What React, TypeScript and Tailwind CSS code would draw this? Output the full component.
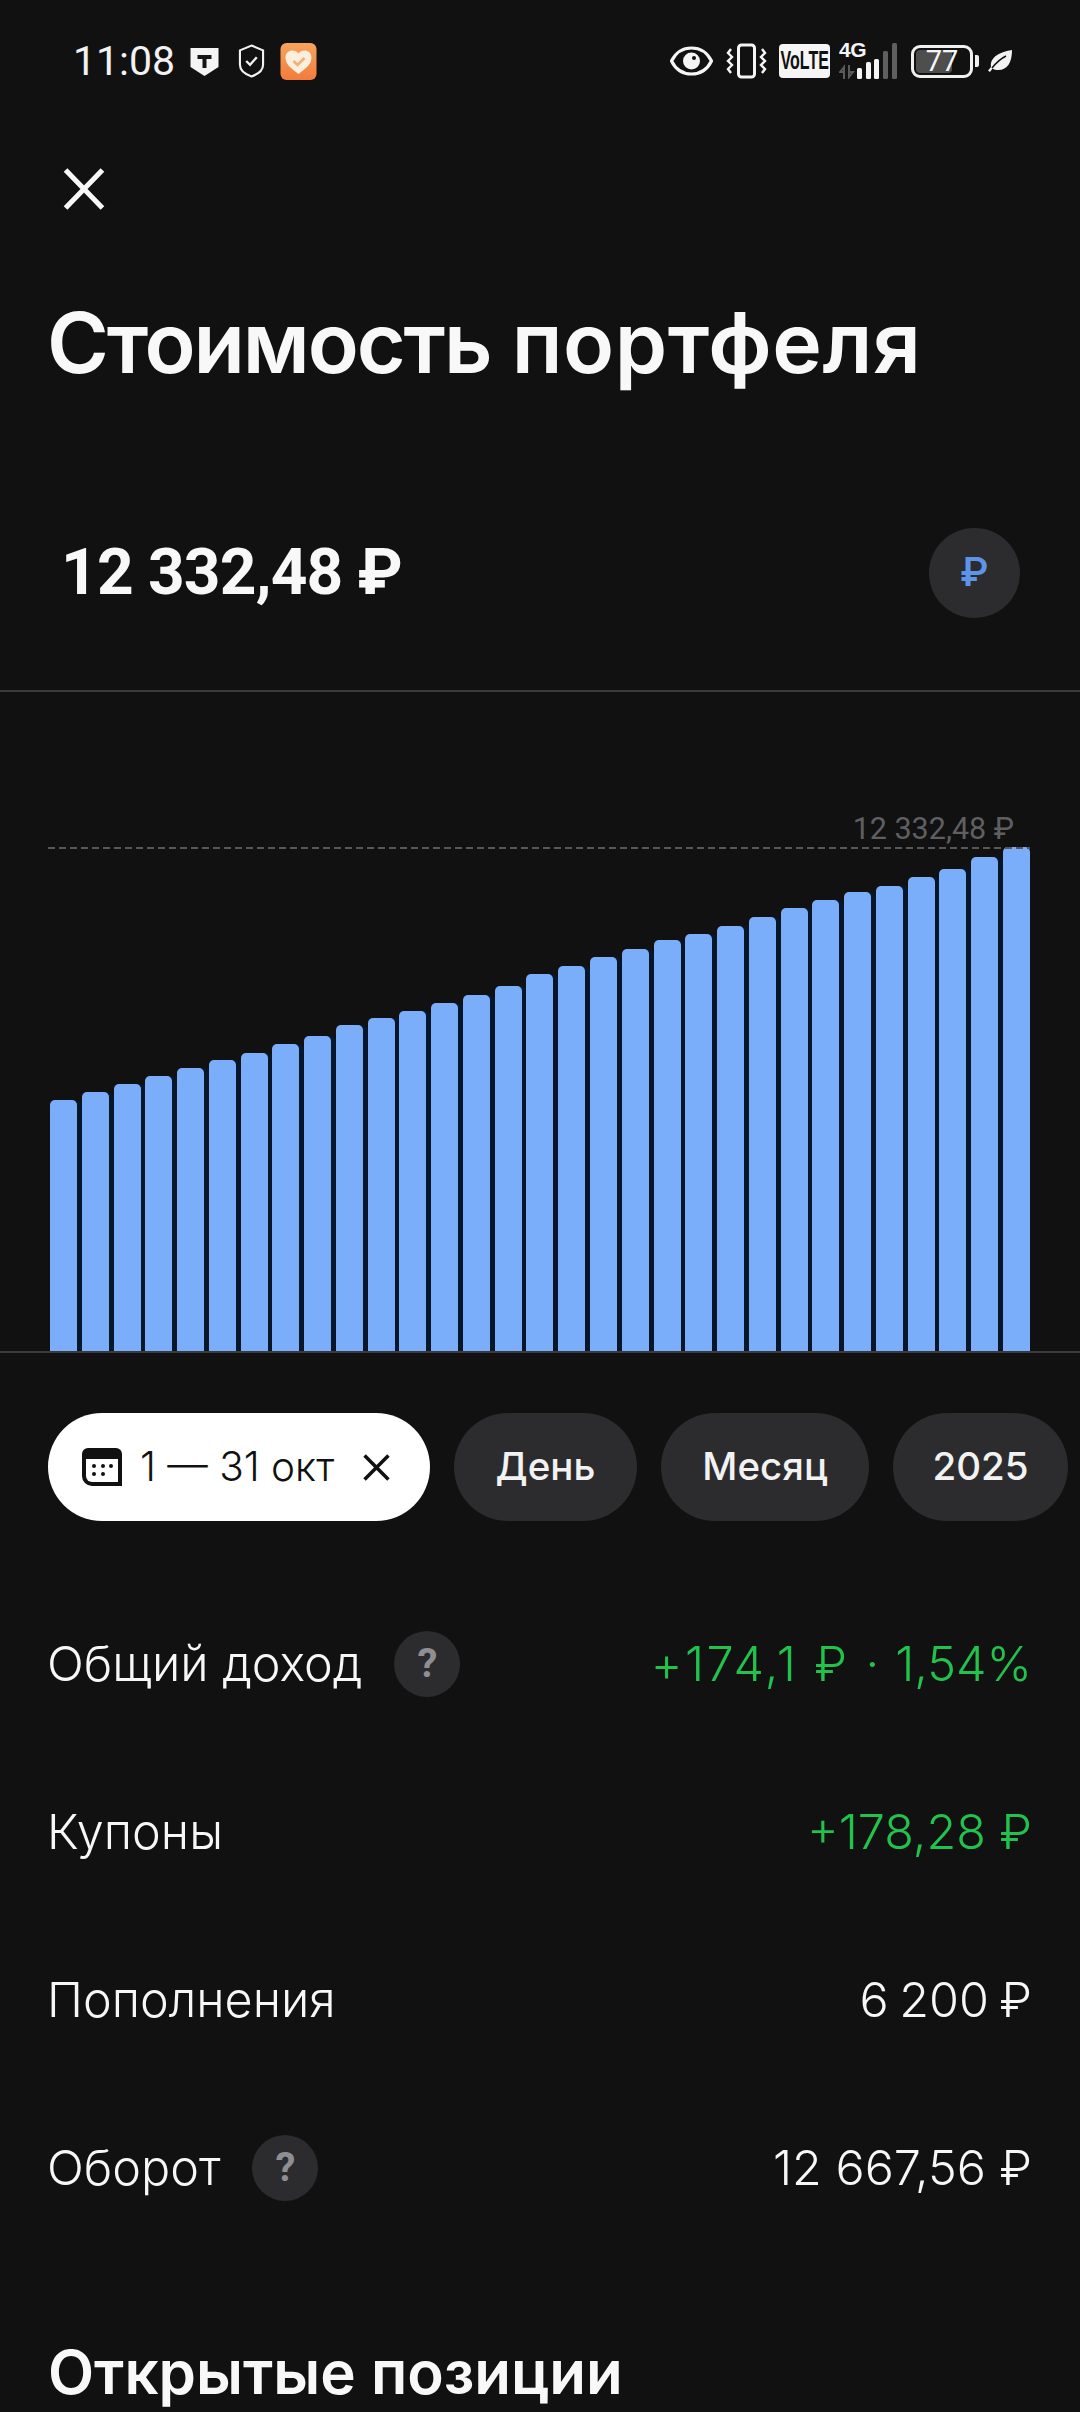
import React from "react";

// Day-by-day top edge of each bar, measured as height above the chart floor.
const barTops = [1100, 1092, 1084, 1076, 1068, 1060, 1053, 1044, 1036, 1025, 1018, 1011, 1003, 995, 986, 974, 966, 957, 949, 940, 934, 926, 917, 908, 900, 892, 886, 877, 869, 857, 847];
const chartFloor = 1351;

function StatusLeft() {
  return (
    <div className="flex items-center">
      <span className="w-[117px] text-[41px] leading-[44px] text-[#f2f2f2] font-['Roboto',sans-serif]">11:08</span>
      <svg width="29" height="29" viewBox="0 0 28 29">
        <path d="M0 1h28v19l-14 9L0 20z" fill="#f4f4f4" />
        <path d="M7 8h14v4h-5v9h-4v-9H7z" fill="#151515" />
      </svg>
      <svg width="27" height="36" viewBox="0 0 28 36" className="ml-[19px]">
        <path d="M14 2l12 5v15c0 6-6 10-12 12C8 32 2 28 2 22V7z" fill="none" stroke="#f2f2f2" strokeWidth="2.2" />
        <path d="M8.500 18l4 4 7-8" fill="none" stroke="#f2f2f2" strokeWidth="2.4" />
      </svg>
      <svg width="37" height="37" viewBox="0 0 36 37" className="ml-[15px]">
        <defs>
          <linearGradient id="heartTile" x1="0" y1="0" x2="0" y2="1">
            <stop offset="0" stopColor="#f6a45c" />
            <stop offset="1" stopColor="#f27c3d" />
          </linearGradient>
        </defs>
        <rect width="36" height="37" rx="6" fill="url(#heartTile)" />
        <path d="M18 31C10 25 5 21 5 14.500C5 10 8.500 7.500 12 7.500c2.500 0 4.700 1 6 3 1.300-2 3.500-3 6-3 3.500 0 7 2.500 7 7C31 21 26 25 18 31z" fill="#fdeedd" />
        <path d="M13 18l4 4 7-7" fill="none" stroke="#eeb27c" strokeWidth="2.6" />
      </svg>
    </div>
  );
}

function StatusRight() {
  return (
    <div className="flex items-center">
      <svg width="43" height="30" viewBox="0 0 43 30">
        <path d="M1.500 15C6 6 13 2 21.500 2S37 6 41.500 15C37 24 30 28 21.500 28S6 24 1.500 15z" fill="none" stroke="#f5f5f5" strokeWidth="3.200" />
        <circle cx="21.500" cy="15" r="8.500" fill="#f5f5f5" />
        <circle cx="24" cy="12" r="2" fill="#111112" />
      </svg>
      <svg width="41" height="36" viewBox="0 0 41 36" className="ml-[13px]">
        <rect x="12.500" y="2" width="16" height="32" rx="3" fill="none" stroke="#f5f5f5" strokeWidth="3" />
        <path d="M5 6l-3 4 4 4-4 4 4 4-4 4 3 4M36 6l3 4-4 4 4 4-4 4 4 4-3 4" fill="none" stroke="#f5f5f5" strokeWidth="2.400" />
      </svg>
      <div className="ml-[12px] flex h-[34px] w-[51px] items-center justify-center overflow-hidden rounded-[4px] bg-[#f5f5f5] text-[25px] font-bold text-[#111112] font-['Liberation_Sans',sans-serif]">
        <span className="shrink-0 scale-x-[0.64] whitespace-nowrap">VoLTE</span>
      </div>
      <div className="relative ml-[9px] h-[36px] w-[58px]">
        <span className="absolute left-0 top-[-5px] text-[21px] leading-[24px] font-bold tracking-[-0.5px] text-[#f5f5f5] font-['Liberation_Sans',sans-serif]">4G</span>
        <svg width="58" height="36" viewBox="0 0 58 36" className="absolute left-0 top-0">
          <path d="M5 36V24l-4 5h4M10 22v12l4-5h-4" fill="none" stroke="#5a5a5a" strokeWidth="2" />
          <rect x="18" y="25" width="5" height="11" rx="1.500" fill="#f5f5f5" />
          <rect x="27" y="19" width="5" height="17" rx="1.500" fill="#f5f5f5" />
          <rect x="35" y="16" width="5" height="20" rx="1.500" fill="#f5f5f5" />
          <rect x="44" y="8" width="5" height="28" rx="1.500" fill="#5f5f5f" />
          <rect x="53" y="0" width="5" height="36" rx="1.500" fill="#5f5f5f" />
        </svg>
      </div>
      <div className="relative ml-[14px] flex h-[33px] w-[62px] items-center justify-center rounded-[9px] border-[3px] border-[#f0f0f0] text-[29px] leading-none text-[#f5f5f5] font-['Roboto',sans-serif]">
        <div className="absolute inset-y-[2px] left-[2px] w-[36px] rounded-[4px] bg-[#4e4e4e]" />
        <span className="relative">77</span>
      </div>
      <div className="ml-[2px] h-[12px] w-[4px] rounded-r-[2px] bg-[#f0f0f0]" />
      <svg width="24" height="23" viewBox="0 0 24 23" className="ml-[9px]">
        <path d="M24 0C24 12 20 20 10 20c-2 0-4-.5-5.500-1.500L2 22 0 20.500 3 17C1.500 9 9 2 24 0z" fill="#f2f2f2" />
        <path d="M4 18C8 13 12 9 18 6" fill="none" stroke="#111112" strokeWidth="1.500" />
      </svg>
    </div>
  );
}

function Hint() {
  return (
    <div className="ml-[32px] flex h-[66px] w-[66px] items-center justify-center rounded-full bg-[#2c2c2e] text-[40px] font-bold text-[#8e8e93] font-['Roboto',sans-serif]">
      ?
    </div>
  );
}

function Row({ label, value, green, hint }: { label: string; value: React.ReactNode; green?: boolean; hint?: boolean }) {
  return (
    <div className="flex h-[168px] items-center justify-between pl-[47px] pr-[48px] text-[48.5px] font-[350]">
      <div className="flex items-center">
        <span className="text-[#f7f7f7]">{label}</span>
        {hint && <Hint />}
      </div>
      <span className={green ? "text-[#22c34c]" : "text-[#f7f7f7]"}>{value}</span>
    </div>
  );
}

function Pill({ children, className }: { children: React.ReactNode; className: string }) {
  return (
    <div className={`flex h-[108px] items-center justify-center rounded-full bg-[#2c2c2e] text-[38.5px] font-[450] text-[#f2f2f2] ${className}`}>
      {children}
    </div>
  );
}

export default function App() {
  return (
    <div className="flex h-[2412px] w-[1080px] flex-col overflow-hidden bg-[#111112] font-['Inter',sans-serif]">
      <div className="flex h-[122px] items-center justify-between pl-[73px] pr-[68px]">
        <StatusLeft />
        <StatusRight />
      </div>

      <svg width="42" height="42" viewBox="0 0 40 41" className="ml-[63px] mt-[46px] shrink-0">
        <path d="M2 2l36 37M38 2L2 39" stroke="#f7f7f7" strokeWidth="5" fill="none" />
      </svg>

      <h1 className="ml-[47px] mt-[83px] h-[100px] text-[84px] leading-[100px] font-semibold text-[#f8f8f8] whitespace-nowrap">
        <span className="tracking-[-2.1px]">Стоимость</span> <span className="tracking-[0.6px]">портфеля</span>
      </h1>

      <div className="mt-[135px] flex h-[90px] items-center justify-between pl-[61px] pr-[60px]">
        <span className="text-[64px] font-bold tracking-[-0.8px] text-[#f8f8f8] font-['Roboto',sans-serif]">12 332,48 ₽</span>
        <div className="flex h-[90px] w-[91px] items-center justify-center rounded-full bg-[#2c2c2e] text-[40px] font-medium text-[#5c94e8] font-['Roboto',sans-serif]">
          ₽
        </div>
      </div>

      <div className="mt-[72px] h-[2px] shrink-0 bg-[#3a3a3b]" />

      <div className="relative flex h-[661px] shrink-0 items-end justify-between border-b-2 border-[#3a3a3c] pl-[50px] pr-[50px]">
        <span className="absolute right-[66px] top-[119px] text-[30.5px] leading-[36px] text-[#5f5f61] font-['Roboto',sans-serif]">12 332,48 ₽</span>
        <div className="absolute left-[48px] right-[50px] top-[155px] h-[2px] bg-[repeating-linear-gradient(90deg,#58585a_0_7px,transparent_7px_11px)]" />
        {barTops.map((top, i) => (
          <div
            key={i}
            className={`w-[27px] rounded-t-[5px] bg-[#7aaefb] ${i < barTops.length - 1 ? "shadow-[5px_0_0_#071629]" : ""}`}
            style={{ height: chartFloor - top }}
          />
        ))}
      </div>

      <div className="ml-[48px] mt-[60px] flex gap-[24px]">
        <div className="flex h-[108px] w-[382px] items-center rounded-full bg-white pl-[34px] text-[40.5px] font-[350] text-[#111112]">
          <svg width="40" height="38" viewBox="0 0 40 38">
            <path d="M6 0h28a6 6 0 0 1 6 6v32H10a10 10 0 0 1-10-10V6a6 6 0 0 1 6-6z" fill="#111112" />
            <path d="M4 11h32v23H10a6 6 0 0 1-6-6z" fill="#fff" />
            <g fill="#111112">
              <circle cx="12" cy="18" r="2" /><circle cx="21" cy="18" r="2" /><circle cx="29" cy="18" r="2" />
              <circle cx="12" cy="26" r="2" /><circle cx="21" cy="26" r="2" />
            </g>
          </svg>
          <span className="ml-[18px] whitespace-nowrap">1 — 31 окт</span>
          <svg width="27" height="27" viewBox="0 0 26 26" className="ml-[29px]">
            <path d="M1.500 1.500l23 23M24.500 1.500l-23 23" stroke="#111112" strokeWidth="3.400" fill="none" />
          </svg>
        </div>
        <Pill className="w-[183px]">День</Pill>
        <Pill className="w-[208px]">Месяц</Pill>
        <Pill className="w-[175px]">2025</Pill>
      </div>

      <div className="mt-[59px] flex flex-col">
        <Row
          label="Общий доход"
          value={
            <span className="flex items-center gap-[16px]">
              <span className="tracking-[2.5px]">+174,1 ₽</span>
              <span>·</span>
              <span>1,54%</span>
            </span>
          }
          green
          hint
        />
        <Row label="Купоны" value="+178,28 ₽" green />
        <Row label="Пополнения" value={<span className="[word-spacing:-3px]">6 200 ₽</span>} />
        <Row label="Оборот" value="12 667,56 ₽" hint />
      </div>

      <h2 className="ml-[48px] mt-[84px] text-[60px] leading-[72px] font-semibold text-[#f8f8f8] whitespace-nowrap">
        Открытые позиции
      </h2>
    </div>
  );
}
